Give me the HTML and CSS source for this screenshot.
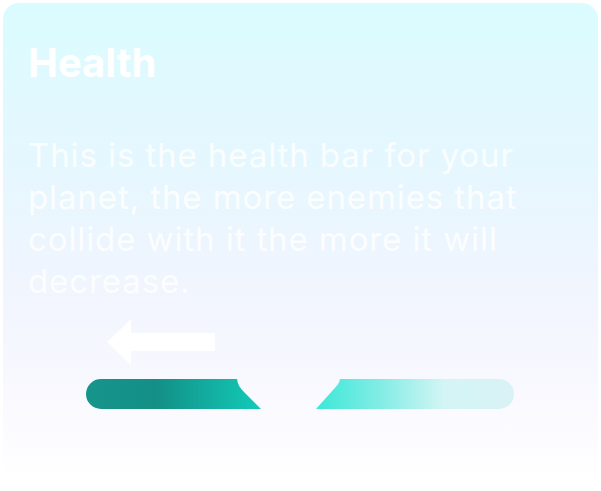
FILE: index.html
```html
<!DOCTYPE html>
<html lang="en">
<head>
<meta charset="utf-8">
<title>Health</title>
<link rel="stylesheet" href="styles.css">
</head>
<body>
<div class="card">
  <h1 class="title">Health</h1>
  <p class="desc">This is the health bar for your planet, the more enemies that collide with it the more it will decrease.</p>
  <svg class="arrow" width="108" height="46" viewBox="0 0 108 46" aria-hidden="true">
    <path d="M0 23 L24 0 L24 14 L108 14 L108 32 L24 32 L24 46 Z" fill="#ffffff"/>
  </svg>
  <svg class="bar" width="428" height="30" viewBox="0 0 428 30" aria-hidden="true">
    <defs>
      <linearGradient id="gl" x1="0" y1="0" x2="175" y2="0" gradientUnits="userSpaceOnUse">
        <stop offset="0" stop-color="#16958b"/>
        <stop offset="0.4" stop-color="#138f86"/>
        <stop offset="1" stop-color="#12cbb8"/>
      </linearGradient>
      <linearGradient id="gr" x1="230" y1="0" x2="428" y2="0" gradientUnits="userSpaceOnUse">
        <stop offset="0" stop-color="#3ce8d8"/>
        <stop offset="0.35" stop-color="#88ede6"/>
        <stop offset="0.65" stop-color="#d4f5f5"/>
        <stop offset="1" stop-color="#d9f2f5"/>
      </linearGradient>
    </defs>
    <path d="M15 0 H151 C151.5 5 154 9 158 13 L175 30 H15 A15 15 0 0 1 15 0 Z" fill="url(#gl)"/>
    <path d="M254 0 H413 A15 15 0 0 1 413 30 H230 L247 11 C250.5 7.5 253.5 4 254 0 Z" fill="url(#gr)"/>
  </svg>
</div>
</body>
</html>
```
FILE: styles.css
```css
html, body {
  margin: 0;
  padding: 0;
  background: #ffffff;
}
body {
  width: 601px;
  height: 491px;
  overflow: hidden;
  font-family: Inter, "Liberation Sans", sans-serif;
}
.card {
  margin: 3px;
  height: 476px;
  box-sizing: border-box;
  padding: 36px 25px 0 25px;
  border-radius: 16px;
  background: linear-gradient(180deg, #dafcff 0%, #e6f7fe 35%, #f1f5fe 60%, #f9f9ff 82%, #ffffff 100%);
  display: flex;
  flex-direction: column;
  align-items: flex-start;
}
.title {
  margin: 0;
  font-size: 40px;
  line-height: 48px;
  font-weight: 700;
  color: #ffffff;
}
.desc {
  margin: 47px 0 0 0;
  font-size: 33px;
  line-height: 42px;
  letter-spacing: 0.9px;
  font-weight: 400;
  color: rgba(255, 255, 255, 0.85);
}
.arrow {
  display: block;
  margin: 17px 0 0 79px;
}
.bar {
  display: block;
  margin: 14px 0 0 58px;
}
```
